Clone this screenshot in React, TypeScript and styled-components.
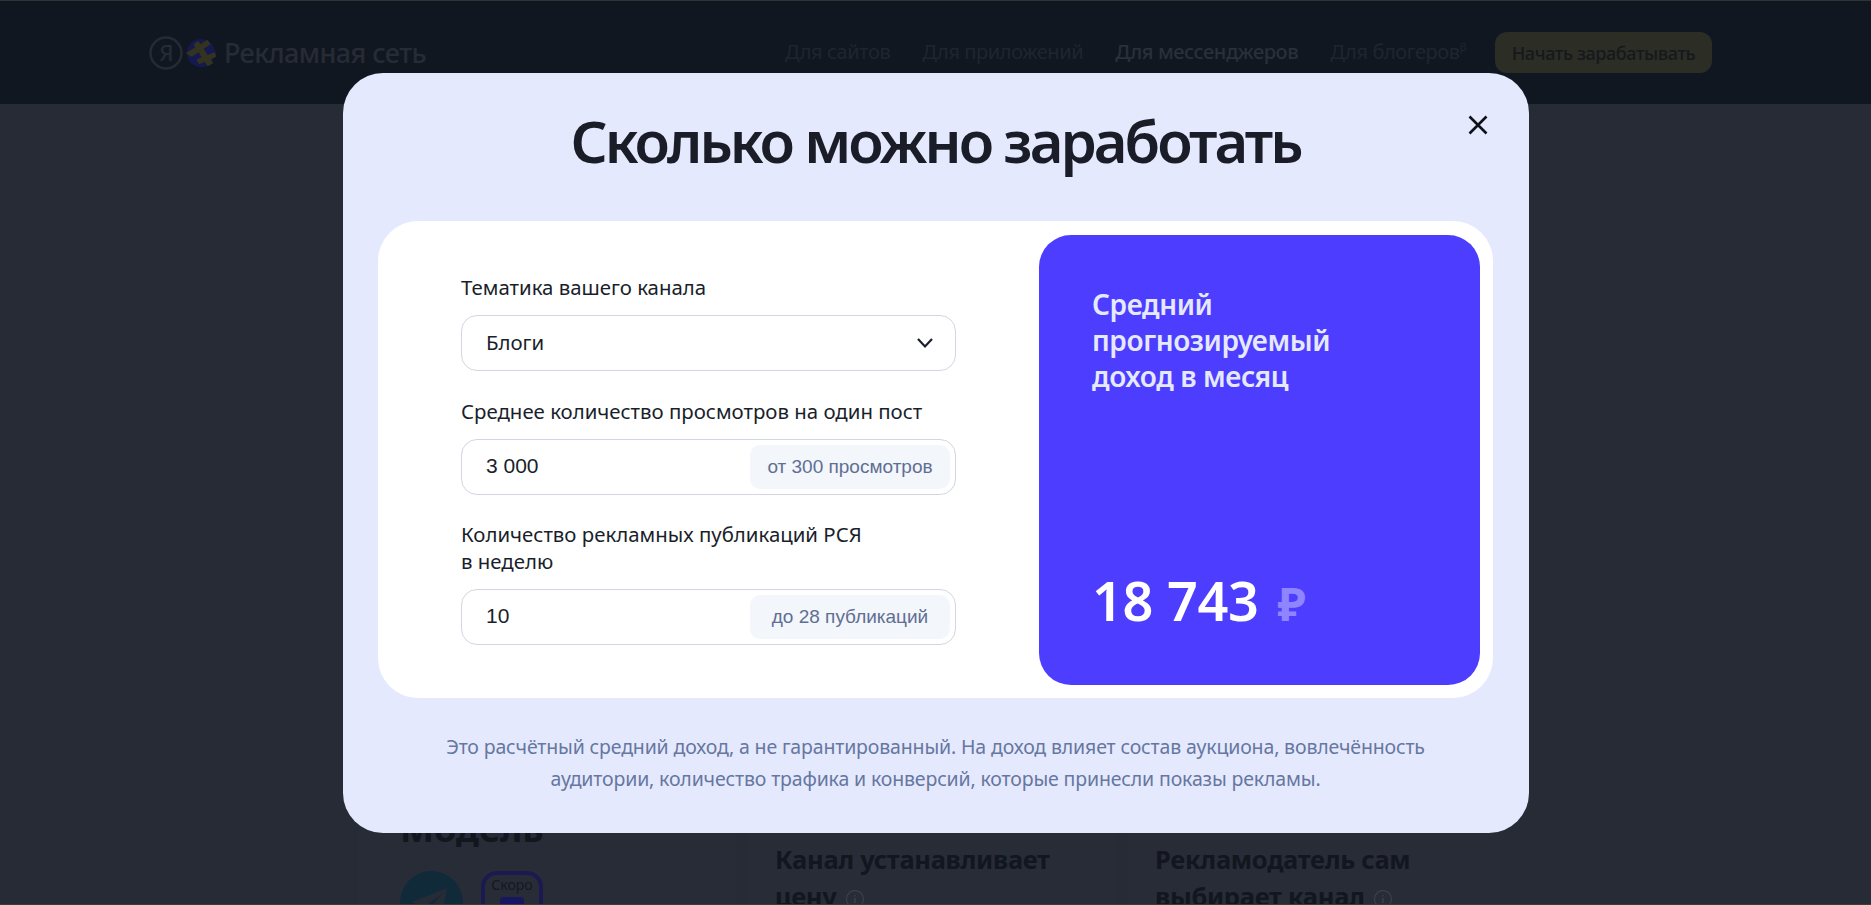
import React from "react";
import styled, { createGlobalStyle } from "styled-components";

const Global = createGlobalStyle`
  html, body { margin: 0; padding: 0; height: 100%; overflow: hidden; background: #272b35; }
  * { box-sizing: border-box; }
`;
const ui = `"Noto Sans", "Open Sans", sans-serif`;

const Page = styled.div`
  height: 905px;
  overflow: hidden;
  display: flex;
  flex-direction: column;
  background: #272b35;
  font-family: ${ui};
  border-top: 1px solid #333;
  border-bottom: 1px solid #3c3c3c;
`;
const Header = styled.header`
  height: 103px;
  flex: none;
  background: #111721;
  display: flex;
  align-items: center;
  justify-content: space-between;
  padding: 0 159px 0 147px;
`;
const Brand = styled.div`
  display: flex;
  align-items: center;
  color: #272b35;
  font-size: 27px;
  font-weight: 500;
  letter-spacing: -0.6px;
`;
const BrandName = styled.span`
  margin-left: 7px;
`;
const Nav = styled.nav`
  display: flex;
  align-items: center;
  gap: 32px;
`;
const NavLink = styled.a<{ $strong?: boolean }>`
  font-size: 20px;
  color: ${(p) => (p.$strong ? "#2a2f3a" : "#1f2530")};
  font-weight: ${(p) => (p.$strong ? 500 : 400)};
  letter-spacing: -0.4px;
  margin-bottom: 2px;
  sup { font-size: 11px; }
`;
const Cta = styled.div`
  height: 41px;
  width: 217px;
  margin-left: -3px;
  border-radius: 12px;
  background: #2c2d24;
  color: #16181f;
  font-size: 18px;
  font-weight: 500;
  letter-spacing: -0.4px;
  display: flex;
  align-items: center;
  justify-content: center;
`;
const Behind = styled.main`
  flex: 1;
  display: grid;
  grid-template-columns: 378px 367px 373px;
  gap: 12px;
  padding: 690px 0 0 358px;
  color: #12161f;
`;
const BehindCard = styled.section<{ $top: number; $left: number }>`
  background: #282c36;
  border-radius: 24px 24px 0 0;
  padding: ${(p) => p.$top}px 0 0 ${(p) => p.$left}px;
`;
const ModelTitle = styled.div`
  font-size: 36px;
  font-weight: 700;
  line-height: 44px;
`;
const BehindTitle = styled.div`
  font-size: 25.5px;
  font-weight: 700;
  line-height: 37px;
  letter-spacing: -0.3px;
  svg { vertical-align: -3px; margin-left: 8px; }
`;
const Channels = styled.div`
  display: flex;
  gap: 18px;
  margin-top: 20px;
`;
const Soon = styled.div`
  position: relative;
  width: 62px;
  height: 62px;
  padding-top: 1px;
  border: 4px solid #1b1a50;
  border-radius: 16px;
  display: flex;
  justify-content: center;
  font-size: 14px;
  line-height: 18px;
  color: #14181f;
`;
const SoonBlock = styled.span`
  position: absolute;
  left: 15px;
  top: 22px;
  width: 24px;
  height: 30px;
  border-radius: 4px;
  background: #171660;
`;
const Overlay = styled.div`
  position: fixed;
  inset: 0;
  display: flex;
  justify-content: center;
  padding-top: 72.5px;
`;
const Modal = styled.div`
  position: relative;
  width: 1186px;
  height: 760px;
  background: #e5e9fe;
  border-radius: 40px;
  padding: 0 35.5px;
`;
const Close = styled.button`
  position: absolute;
  top: 37px;
  right: 36px;
  width: 30px;
  height: 30px;
  padding: 0;
  border: 0;
  background: none;
  display: flex;
  align-items: center;
  justify-content: center;
`;
const Title = styled.h2`
  margin: 0;
  height: 148px;
  padding-top: 28px;
  text-align: center;
  font-size: 58px;
  line-height: 80px;
  font-weight: 600;
  letter-spacing: -2.95px;
  color: #1a1d28;
`;
const Card = styled.div`
  height: 477px;
  background: #fff;
  border-radius: 40px;
  padding: 14px 13px 13px 83px;
  display: flex;
  justify-content: space-between;
`;
const Form = styled.div`
  width: 495px;
  padding-top: 39px;
  display: flex;
  flex-direction: column;
`;
const Label = styled.div`
  font-size: 20.4px;
  line-height: 27px;
  color: #1a1f2b;
  margin-bottom: 14px;
`;
const Field = styled.div<{ $gap?: number }>`
  height: 56px;
  flex: none;
  border: 1px solid #d3d6e2;
  border-radius: 16px;
  display: flex;
  align-items: center;
  justify-content: space-between;
  padding: 0 5px 0 24px;
  margin-bottom: ${(p) => p.$gap ?? 0}px;
  color: #1a1f2b;
`;
const Value = styled.span`
  font-family: "Liberation Sans", Arial, sans-serif;
  font-size: 21px;
  margin-bottom: 2px;
`;
const SelectValue = styled.span`
  font-size: 20.4px;
  margin-bottom: 2px;
`;
const Chevron = styled.svg`
  margin-right: 16px;
`;
const Hint = styled.span`
  width: 200px;
  height: 44px;
  border-radius: 10px;
  background: #f3f6fa;
  display: flex;
  align-items: center;
  justify-content: center;
  font-family: "Liberation Sans", Arial, sans-serif;
  font-size: 19px;
  color: #5f6f94;
`;
const Result = styled.div`
  width: 441px;
  height: 450px;
  background: #4d3dff;
  border-radius: 32px;
  padding: 51px 53px 0 53px;
  display: flex;
  flex-direction: column;
  justify-content: space-between;
`;
const ResultLabel = styled.div`
  font-size: 28px;
  line-height: 36px;
  font-weight: 600;
  letter-spacing: -0.4px;
  color: #e5e9fe;
`;
const Amount = styled.div`
  font-size: 54px;
  line-height: 64px;
  font-weight: 600;
  letter-spacing: -0.3px;
  color: #fff;
  margin-bottom: 50px;
  span { color: #8f85ff; font-size: 47px; font-weight: 700; margin-left: 5px; }
`;
const Note = styled.p`
  margin: 0;
  padding-top: 33.5px;
  text-align: center;
  font-size: 19.5px;
  line-height: 32px;
  letter-spacing: -0.15px;
  color: #6677a0;
`;

function YaLogo() {
  return (
    <svg width="38" height="38" viewBox="0 0 38 38" fill="none">
      <circle cx="19" cy="19" r="15.5" stroke="#262a34" strokeWidth="2.5" />
      <text x="19" y="27" textAnchor="middle" fontSize="22" fill="#262a34" fontFamily="Noto Sans">Я</text>
    </svg>
  );
}
function MarkLogo() {
  return (
    <svg width="32" height="32" viewBox="0 0 34 34">
      <circle cx="17" cy="17" r="15" fill="#141a4d" />
      <path d="M1 17 L24 3 L27 8 L7 21 Z" fill="#34331f" />
      <path d="M14 4 L30 28 L24 31 L9 8 Z" fill="#34331f" />
      <path d="M12 24 L32 16 L33 21 L15 29 Z" fill="#34331f" />
    </svg>
  );
}
function InfoIcon() {
  return (
    <svg width="20" height="20" viewBox="0 0 20 20" fill="none">
      <circle cx="10" cy="10" r="8.5" stroke="#3a3f4a" strokeWidth="1.3" />
      <path d="M10 9v5M10 6v1.4" stroke="#3a3f4a" strokeWidth="1.5" />
    </svg>
  );
}
function TelegramIcon() {
  return (
    <svg width="63" height="63" viewBox="0 0 63 63">
      <circle cx="31.5" cy="31.5" r="31.5" fill="#112a3a" />
      <path d="M12 31 L47 17 L41 48 L30 40 L25 46 L23 37 Z" fill="#272b35" />
      <path d="M23 37 L42 23 L28 39 Z" fill="#112a3a" />
    </svg>
  );
}

export default function App() {
  return (
    <>
      <Global />
      <Page>
        <Header>
          <Brand>
            <YaLogo />
            <MarkLogo />
            <BrandName>Рекламная сеть</BrandName>
          </Brand>
          <Nav>
            <NavLink>Для сайтов</NavLink>
            <NavLink>Для приложений</NavLink>
            <NavLink $strong>Для мессенджеров</NavLink>
            <NavLink>Для блогеров<sup>β</sup></NavLink>
            <Cta>Начать зарабатывать</Cta>
          </Nav>
        </Header>
        <Behind>
          <BehindCard $top={13} $left={42}>
            <ModelTitle>Модель</ModelTitle>
            <Channels>
              <TelegramIcon />
              <Soon>Скоро<SoonBlock /></Soon>
            </Channels>
          </BehindCard>
          <BehindCard $top={47} $left={27}>
            <BehindTitle>Канал устанавливает<br />цену<InfoIcon /></BehindTitle>
          </BehindCard>
          <BehindCard $top={47} $left={28}>
            <BehindTitle>Рекламодатель сам<br />выбирает канал<InfoIcon /></BehindTitle>
          </BehindCard>
        </Behind>
        <Overlay>
          <Modal>
            <Close aria-label="Закрыть">
              <svg width="22" height="22" viewBox="0 0 22 22" fill="none">
                <path d="M2.5 2.5 L19.5 19.5 M19.5 2.5 L2.5 19.5" stroke="#0e1118" strokeWidth="2.6" />
              </svg>
            </Close>
            <Title>Сколько можно заработать</Title>
            <Card>
              <Form>
                <Label>Тематика вашего канала</Label>
                <Field $gap={27}>
                  <SelectValue>Блоги</SelectValue>
                  <Chevron width="18" height="12" viewBox="0 0 18 12" fill="none">
                    <path d="M2 2 L9 9.5 L16 2" stroke="#1a1f2b" strokeWidth="2.2" />
                  </Chevron>
                </Field>
                <Label>Среднее количество просмотров на один пост</Label>
                <Field $gap={26}>
                  <Value>3 000</Value>
                  <Hint>от 300 просмотров</Hint>
                </Field>
                <Label>Количество рекламных публикаций РСЯ<br />в неделю</Label>
                <Field>
                  <Value>10</Value>
                  <Hint>до 28 публикаций</Hint>
                </Field>
              </Form>
              <Result>
                <ResultLabel>Средний<br />прогнозируемый<br />доход в месяц</ResultLabel>
                <Amount>18 743 <span>₽</span></Amount>
              </Result>
            </Card>
            <Note>
              Это расчётный средний доход, а не гарантированный. На доход влияет состав аукциона, вовлечённость<br />
              аудитории, количество трафика и конверсий, которые принесли показы рекламы.
            </Note>
          </Modal>
        </Overlay>
      </Page>
    </>
  );
}
